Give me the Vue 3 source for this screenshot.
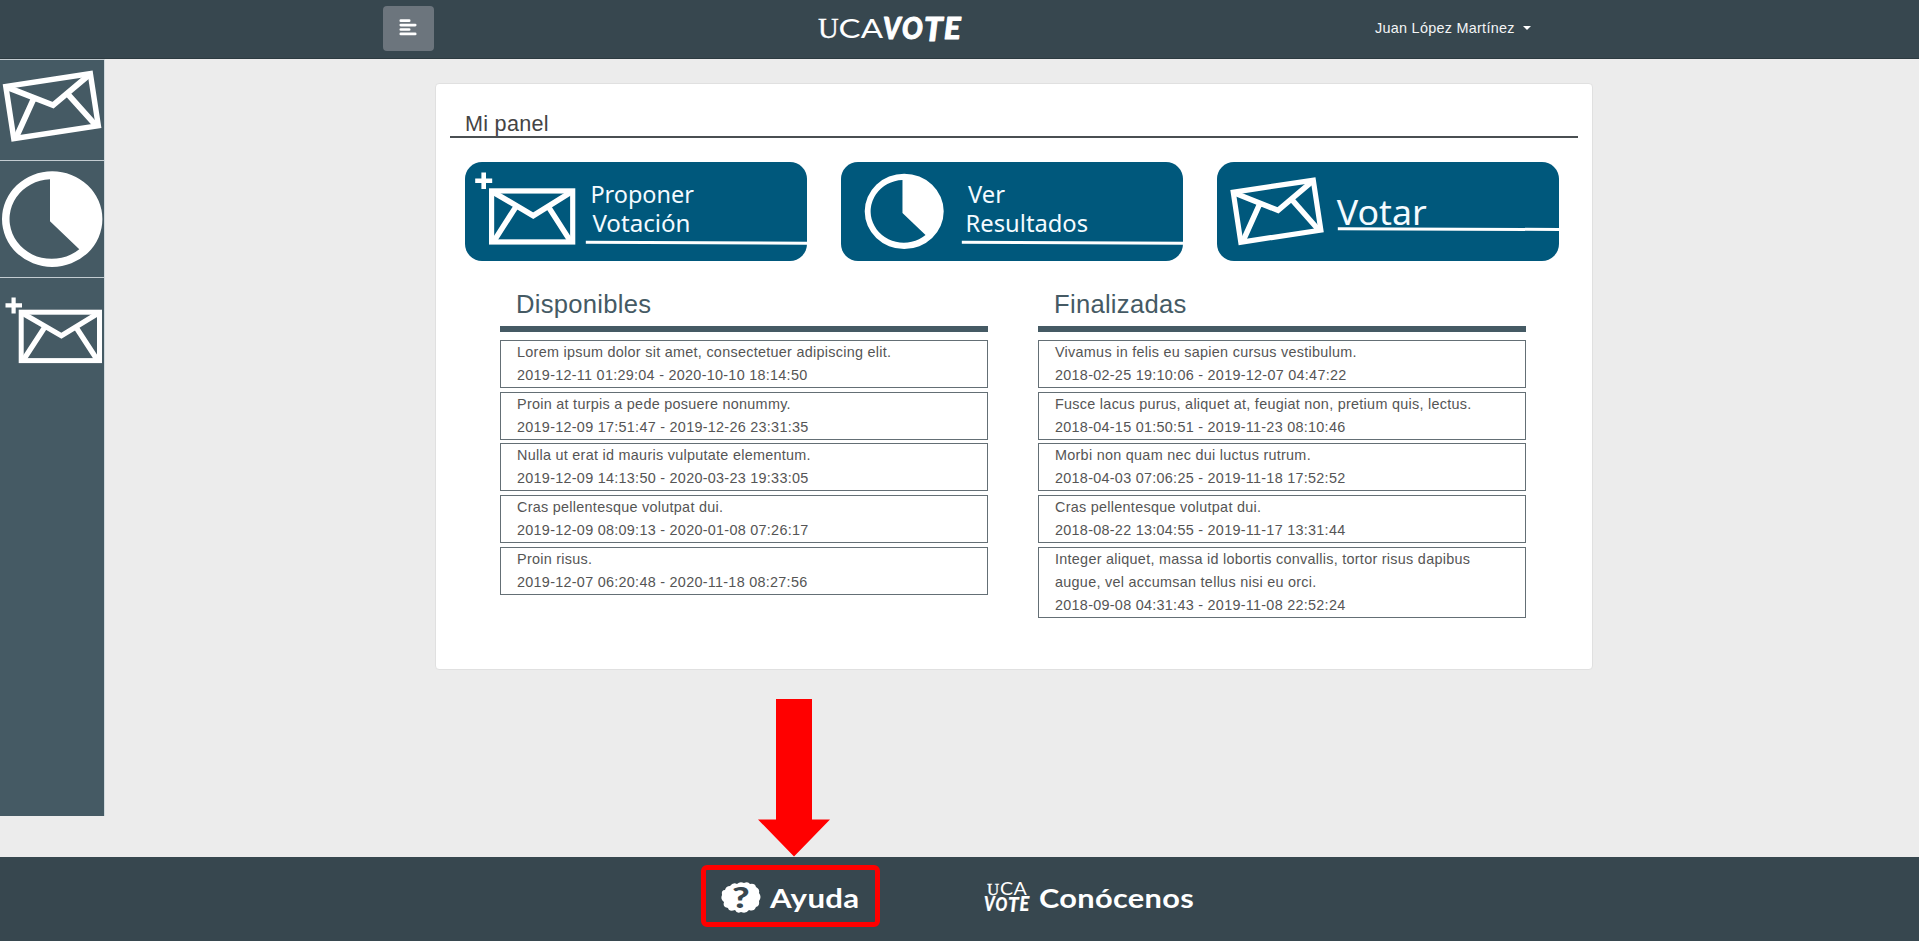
<script setup>
const available = [
  { title: 'Lorem ipsum dolor sit amet, consectetuer adipiscing elit.', dates: '2019-12-11 01:29:04 - 2020-10-10 18:14:50' },
  { title: 'Proin at turpis a pede posuere nonummy.', dates: '2019-12-09 17:51:47 - 2019-12-26 23:31:35' },
  { title: 'Nulla ut erat id mauris vulputate elementum.', dates: '2019-12-09 14:13:50 - 2020-03-23 19:33:05' },
  { title: 'Cras pellentesque volutpat dui.', dates: '2019-12-09 08:09:13 - 2020-01-08 07:26:17' },
  { title: 'Proin risus.', dates: '2019-12-07 06:20:48 - 2020-11-18 08:27:56' },
]
const finished = [
  { title: 'Vivamus in felis eu sapien cursus vestibulum.', dates: '2018-02-25 19:10:06 - 2019-12-07 04:47:22' },
  { title: 'Fusce lacus purus, aliquet at, feugiat non, pretium quis, lectus.', dates: '2018-04-15 01:50:51 - 2019-11-23 08:10:46' },
  { title: 'Morbi non quam nec dui luctus rutrum.', dates: '2018-04-03 07:06:25 - 2019-11-18 17:52:52' },
  { title: 'Cras pellentesque volutpat dui.', dates: '2018-08-22 13:04:55 - 2019-11-17 13:31:44' },
  { title: 'Integer aliquet, massa id lobortis convallis, tortor risus dapibus augue, vel accumsan tellus nisi eu orci.', dates: '2018-09-08 04:31:43 - 2019-11-08 22:52:24' },
]
const columns = [
  { name: 'Disponibles', items: available },
  { name: 'Finalizadas', items: finished },
]
</script>

<template>
  <div class="page">
    <svg class="defs" width="0" height="0">
      <defs>
        <g id="envelope" fill="none" stroke="#fff" stroke-width="5">
          <rect x="2.5" y="2.5" width="78.3" height="48.4" />
          <path stroke-width="5.3" d="M3 3 42.7 26 80.3 3M26.3 17 4.5 50.5M57 17 78.8 50.5" />
        </g>
        <path
          id="pie"
          fill="#fff"
          fill-rule="evenodd"
          d="M50.2 0A50.2 47.8 0 0 1 50.2 95.6A50.2 47.8 0 0 1 50.2 0ZM48 49.9V8A42.2 39.8 0 1 0 77.3 77.9Z"
        />
      </defs>
    </svg>

    <header class="topbar">
      <button class="toggle" aria-label="Menu">
        <svg width="18" height="17" viewBox="0 0 18 17" stroke="#fff" stroke-width="2.7" stroke-linecap="round">
          <path d="M1.8 1.7H10.2M1.8 6.1H16.2M1.8 10.5H10.2M1.8 14.9H16.2" />
        </svg>
      </button>
      <svg class="logo" width="146" height="28" viewBox="0 0 146 28" fill="#fff">
        <text class="serif" x="0" y="21" font-size="29" textLength="21" lengthAdjust="spacingAndGlyphs">U</text>
        <text class="thin" x="20.5" y="21" font-size="27.5" textLength="45" lengthAdjust="spacingAndGlyphs">CA</text>
        <text class="brush" x="65" y="21.5" font-size="31" textLength="18" lengthAdjust="spacingAndGlyphs">V</text>
        <text class="brush" x="84" y="22" font-size="30" textLength="21" lengthAdjust="spacingAndGlyphs">O</text>
        <text class="brush" x="106" y="23.5" font-size="32" textLength="19" lengthAdjust="spacingAndGlyphs">T</text>
        <text class="brush" x="126" y="21.5" font-size="31" textLength="17" lengthAdjust="spacingAndGlyphs">E</text>
      </svg>
      <div class="user"><span>Juan López Martínez</span><i class="caret"></i></div>
    </header>

    <div class="body">
      <nav class="sidebar">
        <a class="side-item vote">
          <svg width="104" height="100">
            <use href="#envelope" transform="translate(2.7 24.3) rotate(-8.7) scale(1.092 1.09)" />
          </svg>
        </a>
        <a class="side-item results">
          <svg width="104" height="115"><use href="#pie" x="2" y="10.3" /></svg>
        </a>
        <a class="side-item propose">
          <svg width="104" height="100">
            <path d="M13.6 19.5V35.5M5.5 27.4H22" stroke="#fff" stroke-width="4.2" />
            <use href="#envelope" x="18.7" y="31.7" />
          </svg>
        </a>
      </nav>

      <main class="card">
        <h1>Mi panel</h1>
        <div class="actions">
          <svg class="action" width="342" height="99" viewBox="0 0 342 99">
            <path d="M18.7 10.5V27M10.2 18.8H27.2" stroke="#fff" stroke-width="4.6" />
            <use href="#envelope" transform="translate(24 26.3) scale(1.036 1.054)" />
            <g class="label" font-size="23.5">
              <text x="125.4" y="41.2" textLength="103.5" lengthAdjust="spacingAndGlyphs">Proponer</text>
              <text x="127.4" y="70.2" textLength="98" lengthAdjust="spacingAndGlyphs">Votación</text>
            </g>
            <path d="M120.8 80.3 342 81.2" stroke="#fff" stroke-width="3" />
          </svg>
          <svg class="action" width="342" height="99" viewBox="0 0 342 99">
            <use href="#pie" transform="translate(23.7 11.7) scale(.787 .788)" />
            <g class="label" font-size="23.5">
              <text x="127" y="41.2" textLength="37" lengthAdjust="spacingAndGlyphs">Ver</text>
              <text x="124.6" y="70.2" textLength="122.5" lengthAdjust="spacingAndGlyphs">Resultados</text>
            </g>
            <path d="M120.8 80.3 342 81.2" stroke="#fff" stroke-width="3" />
          </svg>
          <svg class="action" width="342" height="99" viewBox="0 0 342 99">
            <use href="#envelope" transform="translate(13.3 28.1) rotate(-8.6) scale(1.034 1.043)" />
            <text class="label" font-size="35" x="119.7" y="62.8" textLength="90" lengthAdjust="spacingAndGlyphs">Votar</text>
            <path d="M120.8 66.7 342 67.5" stroke="#fff" stroke-width="3" />
          </svg>
        </div>
        <div class="columns">
          <section v-for="col in columns" :key="col.name" class="column">
            <h2>{{ col.name }}</h2>
            <article v-for="item in col.items" :key="item.dates" class="poll">
              <p>{{ item.title }}</p>
              <p>{{ item.dates }}</p>
            </article>
          </section>
        </div>
      </main>
    </div>

    <footer class="footer">
      <a class="foot-link help">
        <svg width="40" height="32" viewBox="0 0 40 32">
          <path
            fill="#fff"
            d="M9 4Q12 0 16 2Q19-1 23 1Q27-1 29 2Q34 1 35 5Q39 7 38 11Q41 15 38 19Q39 24 35 25Q33 30 28 28Q25 32 20 30Q16 32 14 28Q8 30 7 26Q1 25 3 20Q-1 17 1 13Q0 8 4 8Q5 4 9 4Z"
          />
          <text class="mark" x="11" y="25.5" font-size="29" textLength="18" lengthAdjust="spacingAndGlyphs">?</text>
        </svg>
        <svg class="foot-text" width="92" height="34">
          <text x="1" y="24" textLength="89.5" lengthAdjust="spacingAndGlyphs">Ayuda</text>
        </svg>
      </a>
      <a class="foot-link about">
        <svg width="47" height="32" viewBox="0 0 47 32" fill="#fff">
          <text class="serif" x="3" y="12.8" font-size="17" textLength="12.5" lengthAdjust="spacingAndGlyphs">U</text>
          <text class="thin" x="16" y="12.8" font-size="16.5" textLength="27" lengthAdjust="spacingAndGlyphs">CA</text>
          <text class="brush small" x="0" y="28.5" font-size="20" textLength="11" lengthAdjust="spacingAndGlyphs">V</text>
          <text class="brush small" x="11.5" y="28.5" font-size="19" textLength="12" lengthAdjust="spacingAndGlyphs">O</text>
          <text class="brush small" x="24" y="29.5" font-size="20" textLength="11" lengthAdjust="spacingAndGlyphs">T</text>
          <text class="brush small" x="35.5" y="28.5" font-size="20" textLength="10" lengthAdjust="spacingAndGlyphs">E</text>
        </svg>
        <svg class="foot-text" width="160" height="34">
          <text x="0" y="24" textLength="155" lengthAdjust="spacingAndGlyphs">Conócenos</text>
        </svg>
      </a>
    </footer>

    <svg class="arrow" width="74" height="158" viewBox="0 0 74 158">
      <path fill="#f00" d="M19 0H55V120.5H73L37 157.5 1 120.5H19Z" />
    </svg>
  </div>
</template>

<style>
body {
  margin: 0;
  background: #ececec;
}
</style>

<style scoped>
.page {
  position: relative;
  display: flex;
  flex-direction: column;
  width: 1919px;
  height: 941px;
  overflow: hidden;
  background: #ececec;
  font-family: 'Liberation Sans', Arial, sans-serif;
  font-size: 14.4px;
  letter-spacing: 0.28px;
  color: #555;
}
svg {
  overflow: visible;
  flex: none;
}
.defs {
  position: absolute;
}
.topbar {
  box-sizing: border-box;
  flex: none;
  height: 59px;
  padding: 6px 0 0 383px;
  display: flex;
  align-items: flex-start;
  background: #37474f;
  border-bottom: 1px solid #2c3a40;
}
.toggle {
  display: flex;
  justify-content: center;
  align-items: center;
  width: 51px;
  height: 45px;
  padding: 0 1px 2px 0;
  border: 0;
  border-radius: 4px;
  background: #6c757d;
}
.logo {
  margin: 10.5px 0 0 384px;
}
.user {
  display: flex;
  align-items: center;
  margin: 13px 0 0 411px;
  line-height: 18px;
  color: #f3f5f6;
}
.caret {
  margin-left: 8px;
  border: 4.5px solid transparent;
  border-top-color: #fff;
  border-bottom: 0;
}
.serif {
  font-family: 'Liberation Serif', serif;
  stroke: #fff;
  stroke-width: 0.3px;
}
.thin {
  font-family: Lato, sans-serif;
  font-weight: 400;
}
.brush {
  font-family: Lato, sans-serif;
  font-weight: 900;
  font-style: italic;
  stroke: #fff;
  stroke-width: 1px;
  stroke-linejoin: round;
}
.small {
  stroke-width: 0.2px;
}
.body {
  display: flex;
  flex: none;
  height: 797.5px;
}
.sidebar {
  width: 104px;
  height: 757px;
  background: #455a64;
  border-right: 1px solid #cfd8dc;
  box-sizing: content-box;
}
.side-item {
  display: block;
  border-top: 1px solid #c3ccd1;
}
.side-item svg {
  display: block;
}
.vote {
  height: 100px;
}
.results {
  height: 116px;
}
.card {
  box-sizing: border-box;
  width: 1158px;
  height: 587px;
  margin: 24px 0 0 330px;
  padding: 25px 14px 0;
  background: #fff;
  border: 1px solid #e0e0e0;
  border-radius: 4px;
}
h1 {
  margin: 0;
  height: 27px;
  padding-left: 15px;
  border-bottom: 2px solid #4a4f52;
  font-size: 21.6px;
  font-weight: 400;
  line-height: 29px;
  color: #444;
}
.actions {
  display: flex;
  gap: 34px;
  padding: 24px 0 0 15px;
}
.action {
  background: #00587c;
  border-radius: 17px;
}
.label {
  font-family: 'Noto Sans', 'Open Sans', sans-serif;
  fill: #f4fbff;
  letter-spacing: 0;
}
.columns {
  display: flex;
  gap: 50px;
  padding: 24px 0 0 50px;
}
.column {
  width: 488px;
}
h2 {
  margin: 0 0 8px;
  padding-left: 16px;
  height: 41px;
  border-bottom: 6px solid #455a64;
  font-size: 25.6px;
  font-weight: 400;
  line-height: 38px;
  color: #455a64;
}
.poll {
  padding: 0 16px;
  margin-bottom: 3.8px;
  border: 1px solid #646f75;
}
.poll p {
  margin: 0;
  line-height: 22.95px;
}
.footer {
  display: flex;
  flex: none;
  box-sizing: border-box;
  align-items: flex-start;
  height: 85px;
  padding: 8.5px 0 0 701px;
  background: #37474f;
}
.foot-link {
  display: flex;
  box-sizing: border-box;
  height: 62px;
  padding-top: 12px;
}
.help {
  width: 179px;
  padding-left: 15px;
  border: 5px solid #f00;
  border-radius: 6px;
}
.about {
  margin-left: 104px;
  padding-top: 17px;
}
.foot-text {
  margin: 2px 0 0 8px;
  font-family: Lato, sans-serif;
  font-size: 27px;
  font-weight: 700;
  fill: #fff;
}
.mark {
  font-family: Lato, sans-serif;
  font-weight: 900;
  fill: #37474f;
}
.arrow {
  position: absolute;
  left: 757px;
  top: 699px;
}
</style>
